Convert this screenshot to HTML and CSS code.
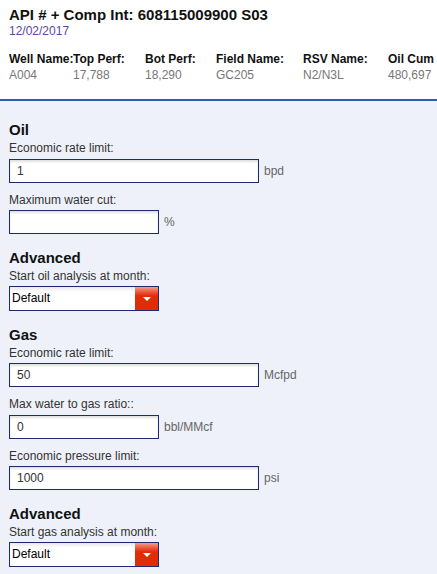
FILE: index.html
```html
<!DOCTYPE html>
<html>
<head>
<meta charset="utf-8">
<link rel="stylesheet" href="styles.css">
</head>
<body>
<div class="page">
  <header class="head">
    <h1 class="title">API # + Comp Int: 608115009900 S03</h1>
    <div class="date">12/02/2017</div>
    <div class="info">
      <div class="col c1"><div class="k">Well Name:</div><div class="v">A004</div></div>
      <div class="col c2"><div class="k">Top Perf:</div><div class="v">17,788</div></div>
      <div class="col c3"><div class="k">Bot Perf:</div><div class="v">18,290</div></div>
      <div class="col c4"><div class="k">Field Name:</div><div class="v">GC205</div></div>
      <div class="col c5"><div class="k">RSV Name:</div><div class="v">N2/N3L</div></div>
      <div class="col c6"><div class="k">Oil Cum</div><div class="v">480,697</div></div>
    </div>
  </header>
  <main class="form">
    <section class="group">
      <h2 class="gh">Oil</h2>
      <div class="field">
        <div class="lbl">Economic rate limit:</div>
        <div class="row"><input class="inp wide" type="text" value="1"><span class="unit">bpd</span></div>
      </div>
      <div class="field">
        <div class="lbl">Maximum water cut:</div>
        <div class="row"><input class="inp short" type="text" value=""><span class="unit">%</span></div>
      </div>
    </section>
    <section class="group">
      <h2 class="gh">Advanced</h2>
      <div class="field">
        <div class="lbl">Start oil analysis at month:</div>
        <div class="sel"><span class="sel-text">Default</span><span class="sel-btn"><span class="tri"></span></span></div>
      </div>
    </section>
    <section class="group">
      <h2 class="gh">Gas</h2>
      <div class="field">
        <div class="lbl">Economic rate limit:</div>
        <div class="row"><input class="inp wide" type="text" value="50"><span class="unit">Mcfpd</span></div>
      </div>
      <div class="field">
        <div class="lbl">Max water to gas ratio::</div>
        <div class="row"><input class="inp short" type="text" value="0"><span class="unit">bbl/MMcf</span></div>
      </div>
      <div class="field">
        <div class="lbl">Economic pressure limit:</div>
        <div class="row"><input class="inp wide" type="text" value="1000"><span class="unit">psi</span></div>
      </div>
    </section>
    <section class="group">
      <h2 class="gh">Advanced</h2>
      <div class="field">
        <div class="lbl">Start gas analysis at month:</div>
        <div class="sel"><span class="sel-text">Default</span><span class="sel-btn"><span class="tri"></span></span></div>
      </div>
    </section>
  </main>
</div>
</body>
</html>
```
FILE: styles.css
```css
html, body {
  margin: 0;
  padding: 0;
  overflow: hidden;
  background: #eef1f9;
}
body {
  font-family: "Liberation Sans", Arial, sans-serif;
  color: #222;
}
.page {
  display: flex;
  flex-direction: column;
  min-height: 100vh;
}
.head {
  background: #fff;
  padding: 6px 0 16px 9px;
  border-bottom: 2px solid #2f5db6;
  overflow: hidden;
}
.title {
  margin: 0;
  font-size: 15px;
  line-height: 17px;
  font-weight: bold;
  color: #111;
  white-space: nowrap;
}
.date {
  margin-top: 1px;
  font-size: 12px;
  line-height: 14px;
  color: #5a46a2;
}
.info {
  display: flex;
  margin-top: 13px;
  white-space: nowrap;
  overflow: hidden;
}
.col { flex: none; overflow: hidden; }
.c1 { width: 64px; overflow: visible; }
.c2 { width: 72px; }
.c3 { width: 71px; }
.c4 { width: 87px; }
.c5 { width: 85px; }
.c6 { width: 49px; }
.k {
  font-size: 12px;
  line-height: 16px;
  font-weight: bold;
  color: #111;
}
.v {
  font-size: 12px;
  line-height: 16px;
  color: #777;
}
.form {
  flex: 1;
  padding: 20px 9px 10px 9px;
}
.group + .group { margin-top: 14.5px; }
.gh {
  margin: 0 0 3px 0;
  font-size: 15px;
  line-height: 17px;
  font-weight: bold;
  color: #111;
}
.field + .field { margin-top: 10px; }
.lbl {
  font-size: 12px;
  line-height: 14px;
  color: #333;
  margin-bottom: 3.5px;
}
.row {
  display: flex;
  align-items: center;
}
.inp {
  box-sizing: border-box;
  height: 24px;
  margin: 0;
  padding: 0 7px;
  border: 1px solid #1b2a72;
  border-radius: 0;
  background: #fff;
  box-shadow: inset 0 2px 2px rgba(0, 0, 0, 0.12);
  font-family: "Liberation Sans", Arial, sans-serif;
  font-size: 12px;
  color: #333;
  outline: none;
}
.wide { width: 250px; }
.short { width: 150px; }
.unit {
  margin-left: 5px;
  font-size: 12px;
  color: #666;
}
.sel {
  box-sizing: border-box;
  width: 150px;
  height: 25px;
  display: flex;
  border: 1px solid #1b2a72;
  background: #fff;
}
.sel-text {
  flex: 1;
  padding-left: 2px;
  font-size: 12px;
  line-height: 23px;
  color: #000;
  background: linear-gradient(#e8e8e8, #fff 5px);
}
.sel-btn {
  width: 23px;
  display: flex;
  align-items: center;
  justify-content: center;
  background: linear-gradient(#f39a8c 0, #ea4a2a 6px, #e12d05 9px, #e12d05 100%);
}
.tri {
  width: 0;
  height: 0;
  border-left: 4px solid transparent;
  border-right: 4px solid transparent;
  border-top: 4px solid #fff;
}
```
